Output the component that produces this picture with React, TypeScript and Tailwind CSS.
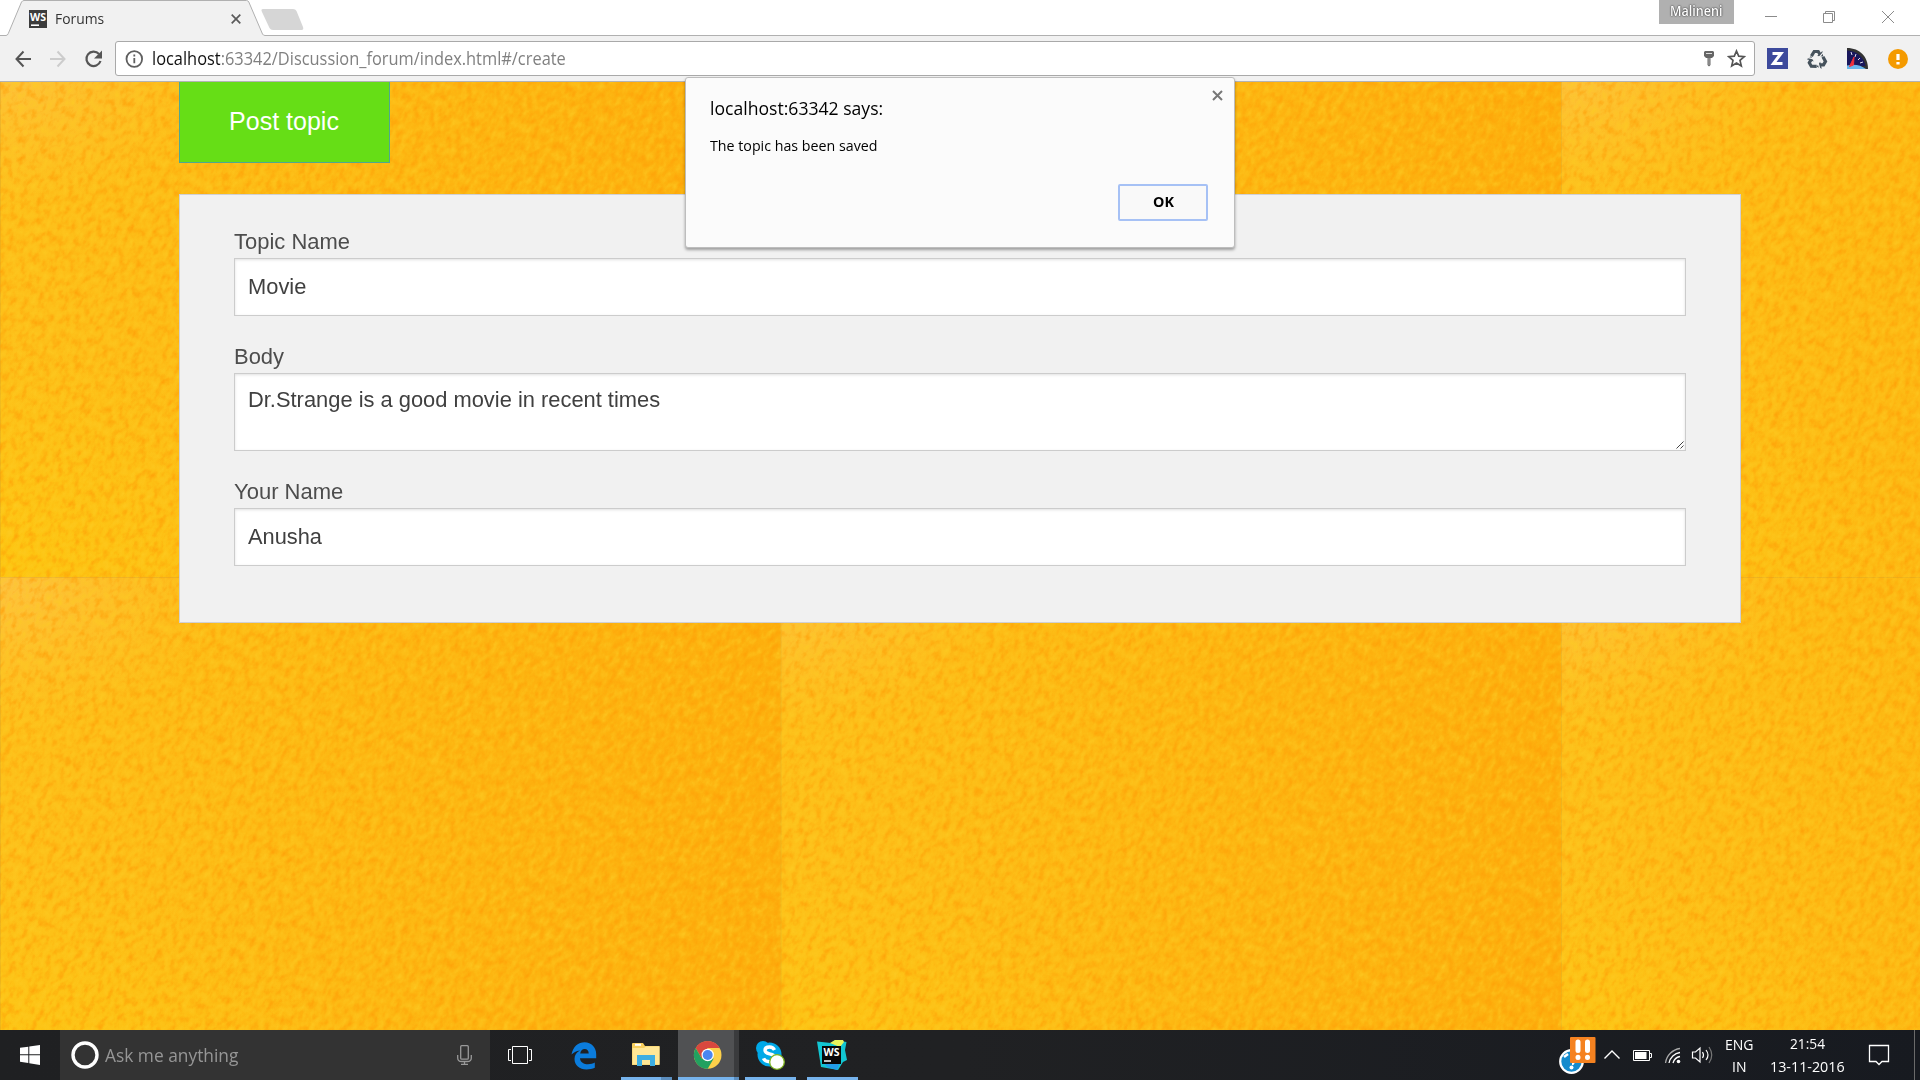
import React from "react";

const NOTO = "font-['Open_Sans',sans-serif]";

const T = ({ text, w, className = "" }: { text: React.ReactNode; w: number; className?: string }) => {
  const ref = React.useRef<HTMLSpanElement>(null);
  const [s, setS] = React.useState(1);
  React.useLayoutEffect(() => {
    if (ref.current) setS(w / ref.current.offsetWidth);
  }, [w]);
  return (
    <span className={"block shrink-0 " + className} style={{ width: w }}>
      <span ref={ref} className="inline-block origin-left whitespace-nowrap" style={{ transform: `scaleX(${s})` }}>
        {text}
      </span>
    </span>
  );
};

function Paper() {
  return (
    <svg className="absolute inset-0 h-full w-full" width="1920" height="948">
      <defs>
        <linearGradient id="across" x1="0" x2="1" y1="0" y2="0">
          <stop offset="0" stopColor="#fdc01a" />
          <stop offset="0.4" stopColor="#fdba14" />
          <stop offset="1" stopColor="#fdb00e" />
        </linearGradient>
        <radialGradient id="corner" cx="0" cy="0" r="0.3">
          <stop offset="0" stopColor="#fdc44c" stopOpacity="0.8" />
          <stop offset="1" stopColor="#fdc230" stopOpacity="0" />
        </radialGradient>
        <radialGradient id="lower" cx="0" cy="1" r="0.45">
          <stop offset="0" stopColor="#fdc90e" stopOpacity="0.7" />
          <stop offset="1" stopColor="#fdc812" stopOpacity="0" />
        </radialGradient>
        <pattern id="sheet" width="780.5" height="521" y="-26" patternUnits="userSpaceOnUse">
          <rect width="781" height="521" fill="url(#across)" />
          <rect width="781" height="521" fill="url(#corner)" />
          <rect width="781" height="521" fill="url(#lower)" />
          <path d="M0.5 0V521M0 0.5H781" stroke="#c99a2a" strokeOpacity="0.3" />
        </pattern>
        <filter id="grain" x="0" y="0" width="100%" height="100%" colorInterpolationFilters="sRGB">
          <feTurbulence type="fractalNoise" baseFrequency="0.17 0.11" numOctaves="4" seed="8" />
          <feColorMatrix values="0 0 0 0 1  0 0 0 0 0.61  0 0 0 0 0.02  2.5 0 0 0 -1.2" />
        </filter>
        <filter id="shine" x="0" y="0" width="100%" height="100%" colorInterpolationFilters="sRGB">
          <feTurbulence type="fractalNoise" baseFrequency="0.17 0.11" numOctaves="4" seed="8" />
          <feColorMatrix values="0 0 0 0 0.99  0 0 0 0 0.8  0 0 0 0 0.14  -2.5 0 0 0 1.2" />
        </filter>
      </defs>
      <rect width="1920" height="948" fill="url(#sheet)" />
      <g transform="rotate(28)">
        <rect x="0" y="-920" width="2160" height="1780" filter="url(#grain)" opacity="0.7" />
        <rect x="0" y="-920" width="2160" height="1780" filter="url(#shine)" opacity="0.7" />
      </g>
    </svg>
  );
}

function WsMark({ size }: { size: number }) {
  return (
    <svg width={size} height={size} viewBox="0 0 18 18">
      <rect width="18" height="18" fill="#3c3c3c" />
      <text x="9" y="10.5" textAnchor="middle" fontSize="10.5" fontWeight="700" fill="#fff" fontFamily="Open Sans" textLength="16" lengthAdjust="spacingAndGlyphs">WS</text>
      <path d="M2 15.2h8" stroke="#fff" strokeWidth="1.6" />
    </svg>
  );
}

function TabStrip() {
  return (
    <div className="relative flex h-[36px] shrink-0 items-start bg-white">
      <svg className="absolute inset-0" width="1920" height="36">
        <path d="M0 36V35.5H6Q7.500 35.500 8.300 33.500L21.500 2Q22.500 .5 24 .5H246.500Q248 .5 248.800 2L262.500 34Q263.300 35.500 265 35.500H1920V36Z" fill="#f1f1f1" />
        <path d="M0 35.500H6Q7.500 35.500 8.300 33.500L21.500 2Q22.500 .5 24 .5H246.500Q248 .5 248.800 2L262.500 34Q263.300 35.500 265 35.500H1920" fill="none" stroke="#b0b0b0" />
        <path d="M263 9H293Q295.500 9 296.500 11L303 27Q304 30 301.500 30H273Q270.500 30 269.500 28L262 12Q260.500 9 263 9Z" fill="#d6d6d6" />
      </svg>
      <div className="relative flex h-[38px] w-[241px] items-center pl-[29px]">
        <WsMark size={18} />
        <T text="Forums" w={49} className={`ml-2 pb-[2px] text-[15px] leading-[36px] text-[#333] ${NOTO}`} />
        <svg className="ml-auto" width="10" height="10"><path d="M.7.7l8.600 8.600M9.300.7L.7 9.300" stroke="#5a5a5a" strokeWidth="1.700" /></svg>
      </div>
      <div className="relative ml-auto flex">
        <div className="flex h-6 w-[75px] justify-center bg-[#b0b0b0]">
          <T text="Malineni" w={53} className={`text-[13.5px] leading-[22px] font-semibold text-white [text-shadow:0_0_2px_#222,0_0_1px_#555] ${NOTO}`} />
        </div>
        <svg width="186" height="35" fill="none" stroke="#8b8b8b">
          <path d="M31 16.500h12" />
          <path d="M89.500 13.500h9v9h-9zM91.500 13.500v-2h9v9h-2" />
          <path d="M148 11l12 12M160 11l-12 12" />
        </svg>
      </div>
    </div>
  );
}

const ARROW = "M-5.600-3.600L-2.800-8.200H1.200L3-5.200";
const HEAD = "M.2-3.800l6 .6L5.400-8.600z";

function Toolbar() {
  return (
    <div className="flex h-[46px] shrink-0 items-center border-b border-[#b3b3b3] bg-[#f1f1f1] pl-[15px]">
      <svg width="88" height="20" fill="none" strokeWidth="2">
        <path d="M16 10H1.500M8.500 2.500L1.500 10l7 7.500" stroke="#555" />
        <path d="M35 10h14.500M42.500 2.500l7 7.500-7 7.500" stroke="#ccc" />
        <path d="M84 5A7.200 7.200 0 1 0 85.500 12" stroke="#555" strokeWidth="2.200" />
        <path d="M87 1.500v8h-8z" fill="#555" />
      </svg>
      <div className="ml-3 flex h-[35px] w-[1640px] items-center rounded-[3px] border border-[#a9a9a9] bg-white pl-[9px] pr-[8px]">
        <svg width="18" height="18" fill="none" stroke="#5f5f5f" strokeWidth="1.800"><circle cx="9.300" cy="9" r="7.800" /><path d="M9.300 8v5.200M9.300 4.600v2" /></svg>
        <T w={414} text={<><span className="text-[#111]">localhost</span>:63342/Discussion_forum/index.html#/create</>} className={`ml-[9px] text-[17.5px] leading-[33px] text-[#808080] ${NOTO}`} />
        <svg className="ml-auto" width="12" height="18"><path d="M2 1h8l1 1v4L9 8H7.500v7L6 16.500 4.500 15V8H3L1 6V2z" fill="#666" /><path d="M3 3.500h6" stroke="#ddd" /><path d="M6 8v7" stroke="#aaa" /></svg>
        <svg className="ml-3" width="19" height="19" viewBox="0 0 19 19"><path d="M9.500 2l2.200 5.200 5.600.5-4.300 3.700 1.300 5.500-4.800-2.900-4.800 2.900L6 11.400 1.700 7.700l5.600-.5z" fill="none" stroke="#555" strokeWidth="1.700" /></svg>
      </div>
      <svg className="ml-3" width="153" height="24">
        <rect y="1" width="21" height="21" fill="#3d4a9c" /><path d="M5.500 6.500h8.500L6.500 16.500h9" fill="none" stroke="#fff" strokeWidth="3" />
        <g transform="translate(50 12.700)" fill="none" stroke="#46525c" strokeWidth="3.200">
          <path d={ARROW} /><path d={HEAD} fill="#46525c" stroke="none" />
          <g transform="rotate(120)"><path d={ARROW} /><path d={HEAD} fill="#46525c" stroke="none" /></g>
          <g transform="rotate(240)"><path d={ARROW} /><path d={HEAD} fill="#46525c" stroke="none" /></g>
          <path d="M0 0L-11-2.500M0 0L7.500-8.500M0 0L3.500 11" stroke="#f1f1f1" strokeWidth="1.200" />
        </g>
        <path d="M80 1C93 1 101 10 101 22H80z" fill="#333" /><path d="M80 3.500C91 4 97 11 98.500 19L80 20z" fill="#19175c" /><path d="M80 18.500Q91 16 99 22H80z" fill="#69b7ed" />
        <path d="M82.500 19.500L87 10l-.5 8z" fill="#f0303c" stroke="#f0303c" /><path d="M84 5l1 3M89 7l-1 3M93 11l-2 2M96 15l-3 1" stroke="#dde" />
        <circle cx="131" cy="12" r="10" fill="#f49a00" /><path d="M131 7v6M131 15v2.500" stroke="#fff" strokeWidth="3.200" />
      </svg>
    </div>
  );
}

function Field({ label, labelWidth, value, valueWidth, area }: { label: string; labelWidth: number; value: string; valueWidth: number; area?: boolean }) {
  return (
    <label className="block text-[21.500px] text-[#4d4d4d]">
      <T text={label} w={labelWidth} className="h-8 leading-[32px]" />
      <span className={area
        ? "relative block h-[78px] border border-[#ccc] bg-white px-[13px] pt-[10px] leading-[32px] text-[#404040] shadow-[inset_0_1px_3px_rgba(0,0,0,0.12)]"
        : "block h-[58px] border border-[#ccc] bg-white px-[13px] leading-[57px] text-[#404040] shadow-[inset_0_1px_3px_rgba(0,0,0,0.12)]"}>
        <T text={value} w={valueWidth} />
        {area && <svg className="absolute right-px bottom-px" width="8" height="8"><path d="M.5 7.500l7-7M4.500 7.500l3-3" stroke="#444" /></svg>}
      </span>
    </label>
  );
}

function Page() {
  return (
    <main className="relative h-[948px] shrink-0 overflow-hidden bg-[#fdb813] font-['Liberation_Sans',sans-serif]">
      <Paper />
      <div className="relative mx-auto w-[1562px]">
        <button className="block h-[81px] w-[211px] border border-t-0 border-[#4fa890] bg-[#66de16] pr-px text-[25px] text-white">Post topic</button>
        <section className="mt-[31px] flex h-[429px] flex-col gap-[25px] border border-[#d0d0d4] bg-[#f1f1f1] px-[54px] pt-[31px]">
          <Field label="Topic Name" labelWidth={116.5} value="Movie" valueWidth={58} />
          <Field label="Body" labelWidth={50} value="Dr.Strange is a good movie in recent times" valueWidth={412} area />
          <Field label="Your Name" labelWidth={109.5} value="Anusha" valueWidth={74} />
        </section>
      </div>
    </main>
  );
}

function Dialog() {
  return (
    <div className={`absolute top-[77px] left-[685px] flex h-[171px] w-[550px] flex-col rounded-[3px] border border-[#bdbdbd] bg-[#fbfbfb] pl-6 text-black shadow-[0_2px_3px_rgba(0,0,0,0.35)] ${NOTO}`}>
      <svg className="absolute top-[12px] right-[11px]" width="11" height="11"><path d="M1 1l9 9M10 1l-9 9" stroke="#777" strokeWidth="2" /></svg>
      <T text="localhost:63342 says:" w={173} className="mt-[16px] text-[18px] leading-[28px]" />
      <T text="The topic has been saved" w={167} className="mt-[11px] text-[15px] leading-[24px]" />
      <button className="mt-[27px] mr-[26px] flex h-[37px] w-[90px] items-center justify-center self-end rounded-[2px] border-2 border-[#a6c1f5] bg-[#f9f9f9] pb-[2px] text-[15px] font-bold">
        <T text="OK" w={21} />
      </button>
    </div>
  );
}

function AppIcons() {
  return (
    <svg width="390" height="50" viewBox="490 0 390 50" className="shrink-0">
      <g fill="none" stroke="#fff"><path d="M512.500 16.500h15v17h-15zM511 19.500h-2.500v11H511M529 19.500h2.500v11H529" /></g>
      <g transform="translate(571.500 12)">
        <path d="M0 12.500C1.500 4.500 7 .3 13 .3 20 .3 24.700 5.500 24.700 12v4.300H8.500c.3 4 4 6 8 6 2.800 0 5-.8 6.800-1.700v5.200C21 27 18 27.500 15 27.500 8 27.500 3 23 3 17c0-4 2-7 5.500-8.600-4 .5-6.500 2-8.500 4.100zM8.700 11.500h8.500c0-3-1.500-4.500-4-4.500s-4.200 1.800-4.500 4.500z" fill="#0b7cdc" />
      </g>
      <path d="M632 14q0-1 1-1h10l2 3h14.500v19H632z" fill="#f7cf5e" /><path d="M632.500 18H644l2-1.500h13.500V34.500h-27z" fill="#ffe796" /><path d="M635 14.800h6" stroke="#fff" strokeWidth="2" />
      <path d="M637 36v-11h18v11h-5v-6h-8v6z" fill="#3daee2" />
      <rect x="678" width="56" height="50" fill="#505153" /><rect x="734" width="5" height="50" fill="#3a3b3d" />
      <g transform="translate(707.700 25)">
        <circle r="13.800" fill="#fcd04a" />
        <path d="M-12-6.900A13.800 13.800 0 0 1 12-6.900H0L-6 3.400z" fill="#d8483e" />
        <path d="M-12-6.900A13.800 13.800 0 0 0 0 13.800L6 3.400H-6z" fill="#22a160" />
        <circle r="6.200" fill="#fff" /><circle r="5" fill="#4a86f0" />
      </g>
      <g><circle cx="769.500" cy="24.500" r="12" fill="#00a9e8" /><circle cx="763" cy="18" r="7" fill="#00a9e8" /><circle cx="775" cy="31" r="7" fill="#00a9e8" />
        <path d="M774.500 20q-1.500-3-5-3-4.500 0-4.500 3.300 0 2.700 4.500 3.500 5.500 1 5.500 4 0 4-5.500 4-4.500 0-6-3.500" fill="none" stroke="#fff" strokeWidth="3.400" />
        <circle cx="777" cy="32" r="7.300" fill="#fff" stroke="#7fb51d" strokeWidth="1.300" /></g>
      <path d="M817 11.500l14 1.500 4-3 11.500 2-1.500 8 2 10-4 2-5 8-17-3z" fill="#12c6d2" /><path d="M830 13l5-3 8 0 1 2-4 5z" fill="#e9f45c" /><path d="M824 33l16 0-3 7-10-3z" fill="#229ce8" />
      <rect x="822" y="16" width="19" height="18" fill="#080808" />
      <text x="831.500" y="25.800" textAnchor="middle" fontSize="10" fontWeight="700" fill="#fff" fontFamily="Open Sans" textLength="16" lengthAdjust="spacingAndGlyphs">WS</text>
      <path d="M824 31h7" stroke="#fff" strokeWidth="1.500" />
      <g fill="#76b3ec"><path d="M621 47h40v3h-40zM678 47h56v3h-56zM745 47h51v3h-51zM807 47h51v3h-51z" /><path d="M661 47h11v3h-11zM734 47h5v3h-5z" fill="#5b8dbd" /></g>
    </svg>
  );
}

function Taskbar() {
  return (
    <footer className={`flex h-[50px] shrink-0 bg-gradient-to-r from-[#1f2022] via-[#202123] to-[#171a20] text-white ${NOTO}`}>
      <div className="flex w-[60px] items-center justify-center">
        <svg width="20" height="20" fill="#fff"><path d="M0 2.800L8.300 1.700v7.600H0zM9.300 1.500L20 0v9.300H9.300zM0 10.300h8.300v7.600L0 16.800zM9.300 10.300H20V20L9.300 18.300z" /></svg>
      </div>
      <div className="flex w-[430px] items-center bg-[#333] pl-[11px] pr-[18px]">
        <svg width="28" height="28"><circle cx="14" cy="14" r="12" fill="none" stroke="#fff" strokeWidth="3.400" /></svg>
        <T text="Ask me anything" w={133} className="ml-[6px] text-[18px] leading-[51px] text-[#969696]" />
        <svg className="ml-auto" width="15" height="20" fill="none" stroke="#999" strokeWidth="1.300"><rect x="3.700" y=".7" width="7.600" height="13.500" rx="1" /><path d="M.7 10v3q0 3.500 4 3.500h5.600q4 0 4-3.500v-3M7.500 17v2.500M4 19.300h7" /></svg>
      </div>
      <AppIcons />
      <svg className="ml-auto shrink-0" width="164" height="50" viewBox="1555 0 164 50" fill="none">
        <circle cx="1571.500" cy="31.500" r="11.300" fill="#148bcd" stroke="#fff" strokeWidth="2.200" /><path d="M1564 27l4-3M1572 34q1 0 2-2" stroke="#fff" strokeWidth="2.500" /><circle cx="1571.500" cy="37.500" r="2" fill="#fff" />
        <rect x="1570" y="7" width="25.500" height="26" rx="1" fill="#f58220" />
        <path d="M1578 12v8.500M1587.500 12v8.500" stroke="#fff" strokeWidth="5" strokeLinecap="round" />
        <path d="M1578 27.300v.1M1587.500 27.300v.1" stroke="#fff" strokeWidth="5" strokeLinecap="round" />
        <path d="M1604.500 28.500l7.500-7.500 7.500 7.500" stroke="#fff" strokeWidth="1.400" />
        <path d="M1633.500 20.500h16v10h-16zM1650 23.500h1.500v4h-1.500" stroke="#fff" /><path d="M1635 22h11.500v7H1635z" fill="#fff" />
        <g stroke="#fff" strokeWidth="1.300"><path d="M1665.500 33A17 17 0 0 1 1680 18.500" stroke="#aaa" /><path d="M1669 33A13 13 0 0 1 1680 22.500" /><path d="M1673 33A9 9 0 0 1 1680 26.500" /></g><circle cx="1678.500" cy="31.500" r="1.800" fill="#fff" />
        <g stroke="#fff" strokeWidth="1.200"><path d="M1692.500 22h3l4.500-4v14l-4.500-4h-3z" /><path d="M1702.500 22q2 3 0 6M1706 20q4 5 0 10" /><path d="M1709 17q5.500 8 0 16" stroke="#777" /></g>
      </svg>
      <div className="flex w-[40px] flex-col items-center pt-[3px] text-[15px] leading-[22px]"><T text="ENG" w={29} /><T text="IN" w={14} /></div>
      <div className="mr-[2px] ml-[10px] flex w-[76px] flex-col items-center pt-[2px] text-[14.5px] leading-[23px]"><T text="21:54" w={35} /><T text="13-11-2016" w={75} /></div>
      <svg className="shrink-0" width="73" height="50"><path d="M22.500 15.500h19v16h-6.500l-3 3-3-3h-6.500z" fill="none" stroke="#fff" strokeWidth="1.300" /><path d="M67.500 0v50" stroke="#6a6a6a" /></svg>
    </footer>
  );
}

export default function App() {
  return (
    <div className="relative flex h-[1082px] w-[1920px] flex-col overflow-hidden bg-white">
      <TabStrip />
      <Toolbar />
      <Page />
      <Taskbar />
      <Dialog />
    </div>
  );
}
